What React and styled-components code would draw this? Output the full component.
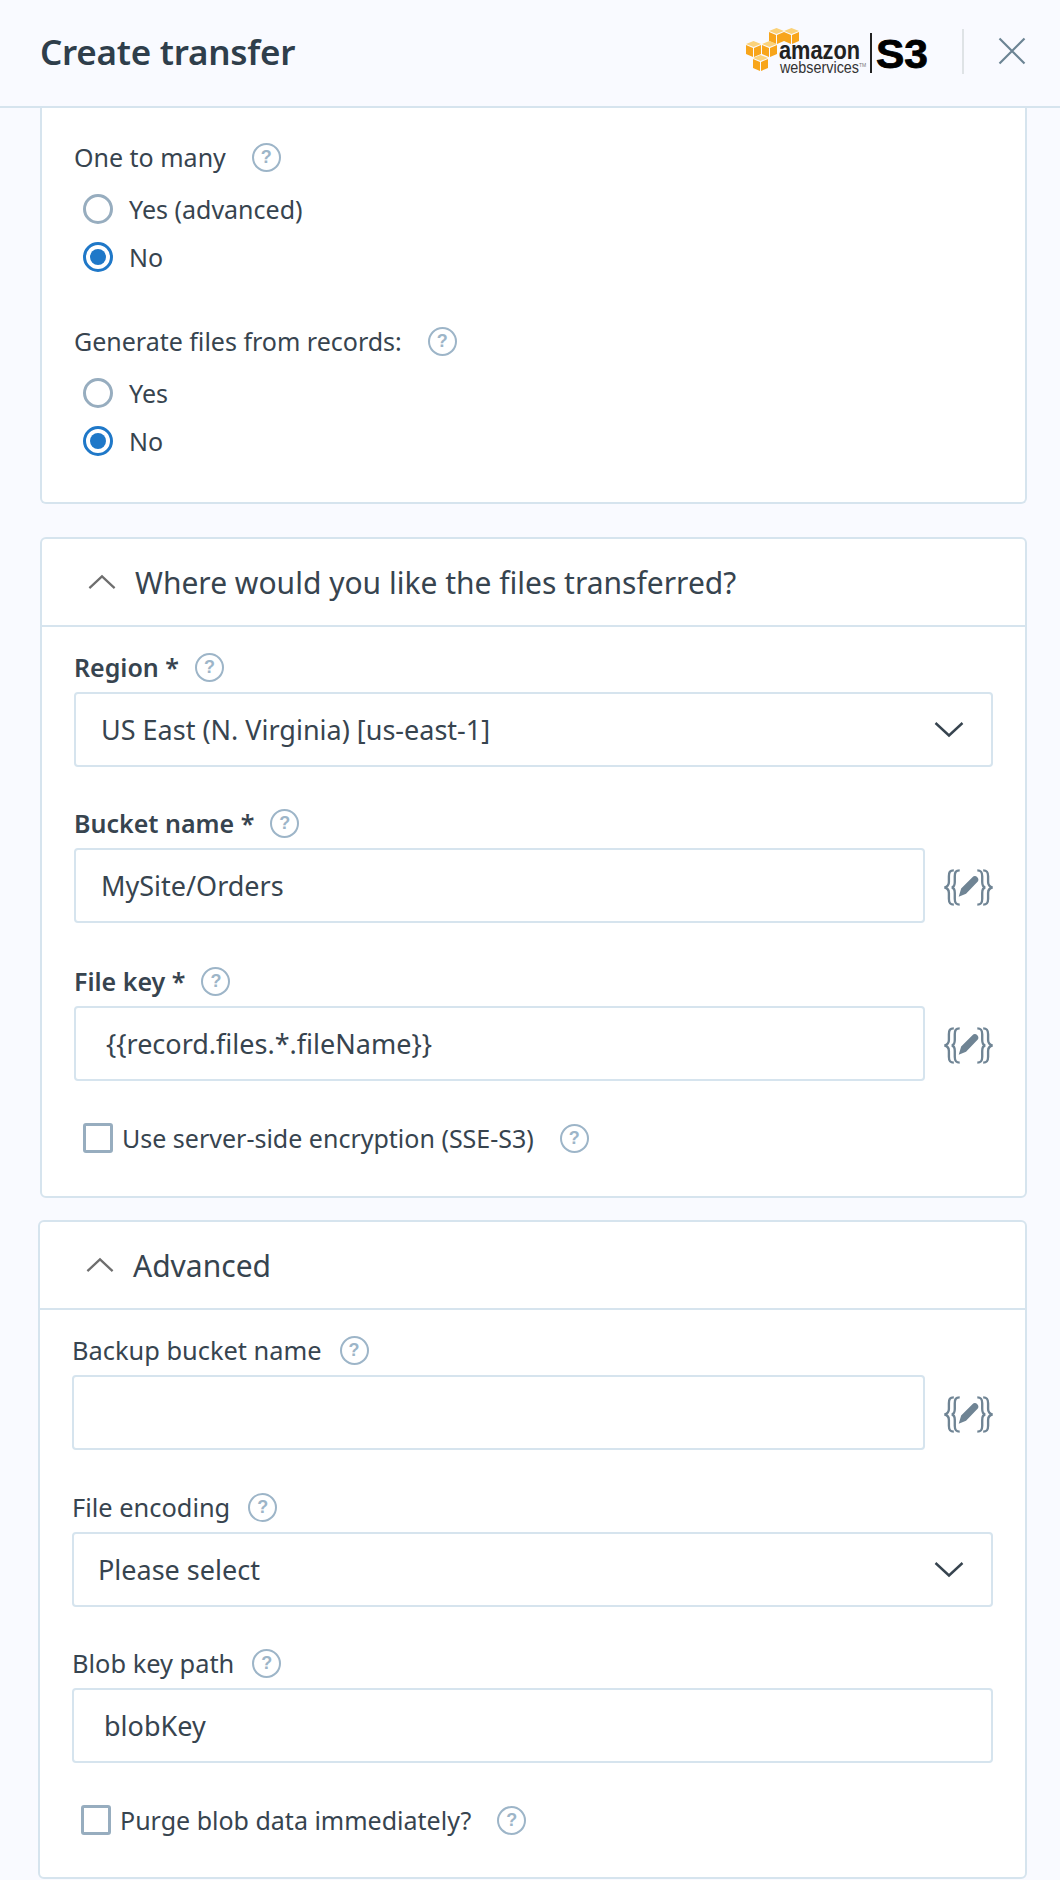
import React from "react";
import styled, { createGlobalStyle } from "styled-components";

const Global = createGlobalStyle`
  html, body {
    margin: 0;
    padding: 0;
    background: #f9faff;
  }
  * { box-sizing: border-box; }
  body {
    font-family: "Noto Sans", "Open Sans", sans-serif;
    color: #37444f;
  }
`;

const Page = styled.div`
  width: 1060px;
  height: 1880px;
  overflow: hidden;
  background: #f9faff;
`;

const Header = styled.header`
  height: 108px;
  display: flex;
  align-items: center;
  padding: 0 34px 4px 40px;
  border-bottom: 2px solid #d6e4ee;
`;

const Title = styled.h1`
  margin: 0;
  font-size: 35px;
  font-weight: 600;
  letter-spacing: -0.25px;
  color: #2f3e4b;
  flex: 1;
`;

const Divider = styled.div`
  width: 2px;
  height: 45px;
  background: #dfe3e6;
  margin: 0 34px 0 28px;
`;

const CloseButton = styled.button`
  display: flex;
  width: 28px;
  height: 28px;
  padding: 0;
  border: none;
  background: none;
`;

const Main = styled.main`
  padding: 0 33px 0 40px;
`;

const Card = styled.section`
  background: #fff;
  border: 2px solid #d6e4ee;
  border-radius: 6px;
  margin-top: ${({ $gap }) => $gap || 33}px;
  margin-left: ${({ $shift }) => $shift || 0}px;
`;

const TopCard = styled(Card)`
  margin-top: 0;
  border-top: none;
  border-radius: 0 0 6px 6px;
  padding: 34px 33px 37px 32px;
`;

const CardHead = styled.div`
  height: 88px;
  display: flex;
  align-items: center;
  gap: 19px;
  padding: 0 0 0 46px;
  border-bottom: 2px solid #d6e4ee;
  font-size: 30px;
  color: #37444f;
`;

const CardBody = styled.div`
  padding: 25px 32px ${({ $bottom }) => $bottom}px 32px;
`;

const LabelRow = styled.div`
  height: 30px;
  display: flex;
  align-items: center;
  gap: ${({ $gap }) => $gap || 16}px;
  font-size: ${({ $size }) => $size || 25}px;
  font-weight: ${({ $bold }) => ($bold ? 600 : 400)};
  margin-top: ${({ $top }) => $top || 0}px;
  margin-bottom: 10px;
`;

const GroupLabel = styled(LabelRow)`
  margin-bottom: 13px;
`;

const HelpCircle = styled.span`
  width: 29px;
  height: 29px;
  flex: none;
  border: 2px solid #9db5c8;
  border-radius: 50%;
  display: flex;
  align-items: center;
  justify-content: center;
  font-size: 18px;
  font-weight: 700;
  color: #9db5c8;
  font-family: "Liberation Sans", sans-serif;
`;

const RadioRow = styled.label`
  height: 48px;
  display: flex;
  align-items: center;
  gap: 16px;
  padding-left: 9px;
  font-size: 25px;
`;

const RadioDot = styled.span`
  width: 30px;
  height: 30px;
  flex: none;
  border-radius: 50%;
  border: 3px solid ${({ $on }) => ($on ? "#1f78c8" : "#97adbf")};
  display: flex;
  align-items: center;
  justify-content: center;
  &::after {
    content: "";
    width: 16px;
    height: 16px;
    border-radius: 50%;
    background: ${({ $on }) => ($on ? "#1f78c8" : "transparent")};
  }
`;

const Box = styled.div`
  height: 75px;
  flex: 1;
  min-width: 0;
  display: flex;
  align-items: center;
  justify-content: space-between;
  padding: 0 27px 0 ${({ $pad }) => $pad || 25}px;
  border: 2px solid #d6e4ee;
  border-radius: 4px;
  background: #fff;
  font-size: 27px;
  color: #37444f;
`;

const InputRow = styled.div`
  display: flex;
  align-items: center;
`;

const BraceSlot = styled.div`
  width: 68px;
  flex: none;
  display: flex;
  justify-content: flex-end;
  padding-top: 4px;
`;

const CheckRow = styled.label`
  height: 30px;
  display: flex;
  align-items: center;
  gap: 9px;
  padding-left: 9px;
  margin-top: 42px;
  font-size: 25px;
`;

const CheckBox = styled.span`
  width: 30px;
  height: 30px;
  flex: none;
  border: 3px solid #97adbf;
  border-radius: 3px;
`;

const CheckHelp = styled.span`
  display: flex;
  margin-left: 17px;
`;

const Chevron = ({ up, color = "#37444f", w = 30 }) => (
  <svg width={w} height={w / 2 + 2} viewBox="0 0 30 17" fill="none">
    <path
      d={up ? "M1.5 15 15 2.5 28.5 15" : "M1.5 2 15 14.5 28.5 2"}
      stroke={color}
      strokeWidth="2.4"
    />
  </svg>
);

const Help = () => <HelpCircle>?</HelpCircle>;

const Braces = () => (
  <svg width="49" height="37" viewBox="0 0 50 37" fill="none">
    <g stroke="#6f8494" strokeWidth="2.400">
      <path d="M10 1C6 1 5 3 5 7v6c0 3-2 5-4.500 5.500C3 19 5 21 5 24v6c0 4 1 6 5 6" />
      <path d="M16 1c-4 0-5 2-5 6v6c0 3-1 5-3 5.500 2 .5 3 2.500 3 5.500v6c0 4 1 6 5 6" />
      <path d="M40 1c4 0 5 2 5 6v6c0 3 2 5 4.500 5.500C47 19 45 21 45 24v6c0 4-1 6-5 6" />
      <path d="M34 1c4 0 5 2 5 6v6c0 3 1 5 3 5.500-2 .5-3 2.500-3 5.500v6c0 4-1 6-5 6" />
    </g>
    <path
      d="M15 28l2.500-8.500L29 8c1.500-1.500 3.500-1.500 5 0s1.500 3.500 0 5L22.500 25z"
      fill="#6f8494"
    />
  </svg>
);

const AwsCube = ({ x, y }) => (
  <g transform={`translate(${x} ${y})`}>
    <path d="M0 3 7.500 0 15 3 7.500 6z" fill="#fbd27a" />
    <path d="M0 4 7 7v9L0 13z" fill="#f8a51b" />
    <path d="M15 4 8 7v9l7-3z" fill="#f8a51b" />
  </g>
);

const Logo = () => (
  <svg width="188" height="50" viewBox="0 0 188 50">
    <AwsCube x="23" y="2" />
    <AwsCube x="38" y="2" />
    <AwsCube x="0" y="15" />
    <AwsCube x="16" y="15" />
    <AwsCube x="7" y="29" />
    <text x="33" y="33" fontFamily="Liberation Sans" fontWeight="700" fontSize="26" textLength="81" lengthAdjust="spacingAndGlyphs" fill="#222">
      amazon
    </text>
    <text x="34" y="47" fontFamily="Liberation Sans" fontSize="16" textLength="79" lengthAdjust="spacingAndGlyphs" fill="#333">
      webservices
    </text>
    <text x="113" y="41" fontFamily="Liberation Sans" fontSize="5" fill="#777">
      TM
    </text>
    <rect x="124" y="7" width="2" height="40" fill="#222" />
    <text x="130" y="42" fontFamily="Liberation Sans" fontWeight="700" fontSize="41" textLength="52" lengthAdjust="spacingAndGlyphs" stroke="#000" strokeWidth="0.8" fill="#000">
      S3
    </text>
  </svg>
);

const CloseIcon = () => (
  <svg width="28" height="28" viewBox="0 0 28 28" fill="none">
    <path d="M1.500 1.500 26.500 26.500M26.500 1.500 1.500 26.500" stroke="#6c8494" strokeWidth="2.200" />
  </svg>
);

const Radio = ({ on, children }) => (
  <RadioRow>
    <RadioDot $on={on} />
    {children}
  </RadioRow>
);

const Check = ({ children }) => (
  <CheckRow>
    <CheckBox />
    {children}
    <CheckHelp>
      <Help />
    </CheckHelp>
  </CheckRow>
);

const Label = ({ text, bold, gap, top, size }) => (
  <LabelRow $bold={bold} $gap={gap} $top={top} $size={size}>
    {text}
    <Help />
  </LabelRow>
);

const BraceInput = ({ value }) => (
  <InputRow>
    <Box $pad={value && value.startsWith("{{") ? 30 : 25}>{value}</Box>
    <BraceSlot>
      <Braces />
    </BraceSlot>
  </InputRow>
);

const SelectBox = ({ value, pad }) => (
  <Box $pad={pad}>
    {value}
    <Chevron />
  </Box>
);

const Section = ({ title, shift, gap, bottom, children }) => (
  <Card $shift={shift} $gap={gap}>
    <CardHead>
      <Chevron up color="#6e6e6e" w={28} />
      {title}
    </CardHead>
    <CardBody $bottom={bottom}>{children}</CardBody>
  </Card>
);

export default function App() {
  return (
    <Page>
      <Global />
      <Header>
        <Title>Create transfer</Title>
        <Logo />
        <Divider />
        <CloseButton>
          <CloseIcon />
        </CloseButton>
      </Header>
      <Main>
        <TopCard>
          <GroupLabel $gap={26}>
            One to many
            <Help />
          </GroupLabel>
          <Radio>Yes (advanced)</Radio>
          <Radio on>No</Radio>
          <GroupLabel $gap={26} $top={45}>
            Generate files from records:
            <Help />
          </GroupLabel>
          <Radio>Yes</Radio>
          <Radio on>No</Radio>
        </TopCard>

        <Section title="Where would you like the files transferred?" bottom={43}>
          <Label text="Region *" bold />
          <SelectBox value="US East (N. Virginia) [us-east-1]" />
          <Label text="Bucket name *" bold top={41} />
          <BraceInput value="MySite/Orders" />
          <Label text="File key *" bold top={43} />
          <BraceInput value="{{record.files.*.fileName}}" />
          <Check>Use server-side encryption (SSE-S3)</Check>
        </Section>

        <Section title="Advanced" shift={-2} gap={22} bottom={42}>
          <Label text="Backup bucket name" size={25.4} gap={18} />
          <BraceInput value="" />
          <Label text="File encoding" top={42} size={25.4} gap={18} />
          <SelectBox value="Please select" pad={24} />
          <Label text="Blob key path" top={41} size={25.4} gap={18} />
          <Box $pad={30}>blobKey</Box>
          <Check>Purge blob data immediately?</Check>
        </Section>
      </Main>
    </Page>
  );
}
